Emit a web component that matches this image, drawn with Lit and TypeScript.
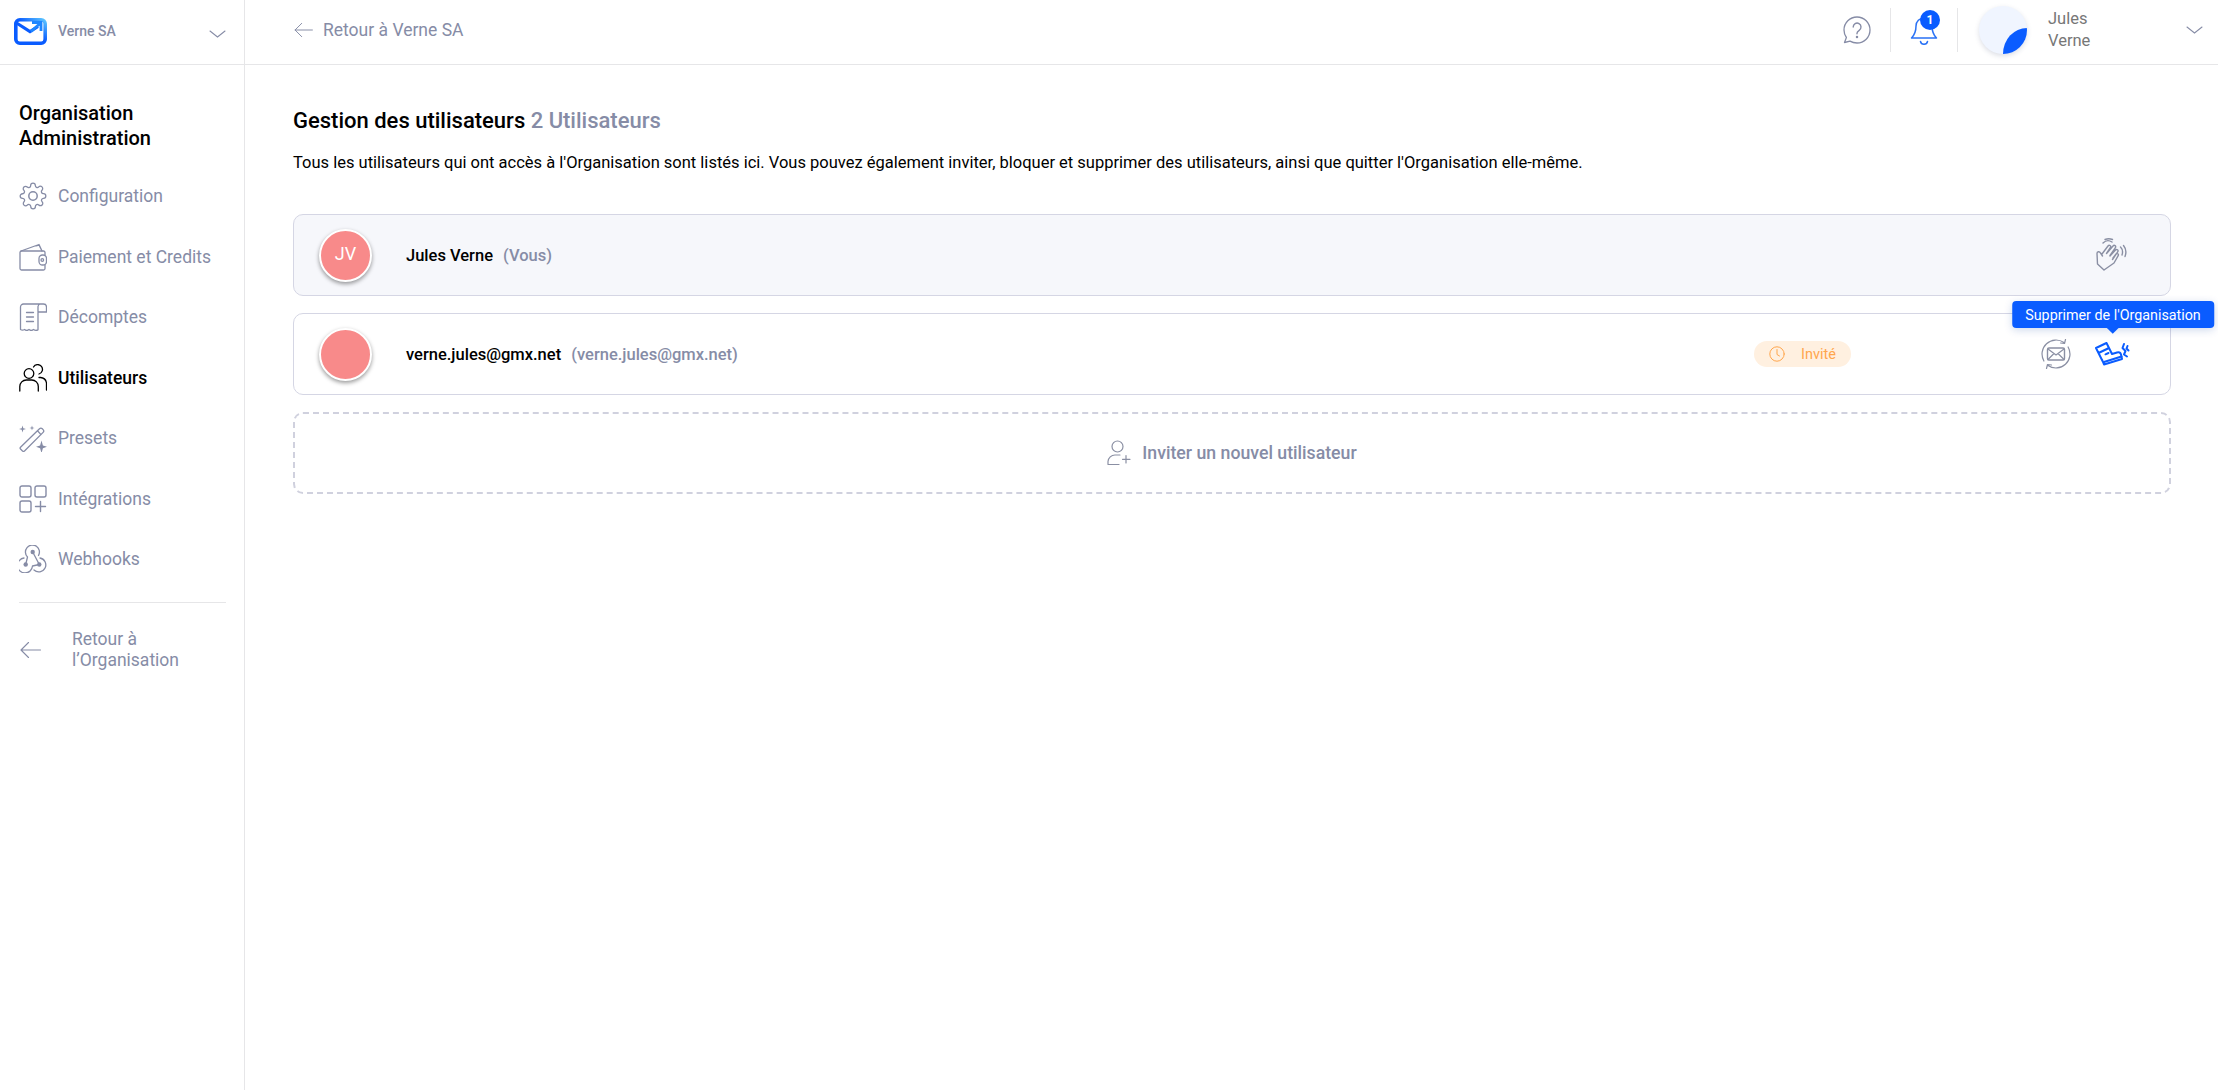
import { LitElement, html, css, svg } from "lit";
import { customElement } from "lit/decorators.js";

const icon = (size: number, vb: number, body: unknown, cls = "") => html`<svg class="ic ${cls}" width=${size} height=${size} viewBox="0 0 ${vb} ${vb}" fill="none" stroke="currentColor" stroke-width="1.3" stroke-linecap="round" stroke-linejoin="round">${body}</svg>`;

const chevron = html`<svg class="chev" width="17" height="8" viewBox="0 0 17 8" fill="none" stroke="currentColor" stroke-width="1.1" stroke-linecap="round"><path d="M1 1l7.5 6L16 1"/></svg>`;
const arrowLeft = (w: number, h: number) => html`<svg class="arrow" width=${w} height=${h} viewBox="0 0 21 18" fill="none" stroke="currentColor" stroke-width="1.1" stroke-linecap="round" stroke-linejoin="round"><path d="M20.5 9H1M8.5 1.5L1 9l7.5 7.5"/></svg>`;

const gear = icon(28, 24, svg`<circle cx="12" cy="12" r="3.6"/><path stroke-width="1.1" d="M19.4 15a1.65 1.65 0 0 0 .33 1.82l.06.06a2 2 0 0 1 0 2.83 2 2 0 0 1-2.83 0l-.06-.06a1.65 1.65 0 0 0-1.82-.33 1.65 1.65 0 0 0-1 1.51V21a2 2 0 0 1-2 2 2 2 0 0 1-2-2v-.09A1.65 1.65 0 0 0 9 19.4a1.65 1.65 0 0 0-1.82.33l-.06.06a2 2 0 0 1-2.83 0 2 2 0 0 1 0-2.83l.06-.06a1.65 1.65 0 0 0 .33-1.82 1.65 1.65 0 0 0-1.51-1H3a2 2 0 0 1-2-2 2 2 0 0 1 2-2h.09A1.65 1.65 0 0 0 4.6 9a1.65 1.65 0 0 0-.33-1.82l-.06-.06a2 2 0 0 1 0-2.83 2 2 0 0 1 2.83 0l.06.06a1.65 1.65 0 0 0 1.82.33H9a1.65 1.65 0 0 0 1-1.51V3a2 2 0 0 1 2-2 2 2 0 0 1 2 2v.09a1.65 1.65 0 0 0 1 1.51 1.65 1.65 0 0 0 1.82-.33l.06-.06a2 2 0 0 1 2.83 0 2 2 0 0 1 0 2.83l-.06.06a1.65 1.65 0 0 0-.33 1.82V9a1.65 1.65 0 0 0 1.51 1H21a2 2 0 0 1 2 2 2 2 0 0 1-2 2h-.09a1.65 1.65 0 0 0-1.51 1z"/>`);
const wallet = icon(28, 28, svg`<path d="M26 12V9.5A1.5 1.5 0 0 0 24.5 8h-22A1.5 1.5 0 0 0 1 9.5v16A1.5 1.5 0 0 0 2.500 27h22a1.500 1.500 0 0 0 1.500-1.500V22"/><path d="M2 8L20 1.500 23 8M17 2.800l3-.8 3 6"/><rect x="20" y="12" width="7.500" height="10" rx="3.500"/><circle cx="23.300" cy="17" r="1.300"/>`);
const receipt = icon(28, 28, svg`<path d="M21 1H4.500A3 3 0 0 0 1.500 4v22.500c1.500 1 2.500 1 4 0 1.500 1.300 3 1.300 4.500 0 1.500 1.300 3 1.300 4.500 0 1.500 1 3 1 4.500.3V3.500M21 1a3 3 0 0 0-2 2.500M21 1h3.500a3 3 0 0 1 3 3v5H19"/><path d="M7.500 9.500h7M7.500 14h7M7.500 18.500h7"/>`);
const users = icon(28, 28, svg`<circle cx="10" cy="9.500" r="4.800"/><path d="M14.500 3A4.800 4.800 0 1 1 20 10"/><path d="M.8 27v-4.500A6.500 6.500 0 0 1 7.300 16h5.500a6.500 6.500 0 0 1 6.500 6.500V27"/><path d="M20 13.500h1.500a6.500 6.500 0 0 1 6 5.500v7"/>`);
const wand = icon(28, 28, svg`<path d="M1.500 23.200L20.500 4.800a2 2 0 0 1 2.800 0l.8.800a2 2 0 0 1 0 2.800L5.500 27a1.500 1.500 0 0 1-2 0l-2-2a1.300 1.300 0 0 1 0-1.800zM18.500 6.800l3.500 3.800"/><g fill="currentColor" stroke="none"><path d="M22.500 16.500l1.400 5 4.100 1.300-4.100 1.400-1.400 5-1.400-5-4.100-1.400 4.100-1.300z"/><path d="M3.500 1.500l.8 2.700 2.700.8-2.700.8-.8 2.700-.8-2.700L0 5l2.700-.8z"/><path d="M13 1.500l.6 1.900 1.900.6-1.900.6-.6 1.900-.6-1.900-1.900-.6 1.900-.6z"/></g>`);
const apps = icon(28, 28, svg`<g stroke-width="1.400"><rect x="1" y="1" width="11" height="11" rx="2"/><rect x="16" y="1" width="11" height="11" rx="2"/><rect x="1" y="16" width="11" height="11" rx="2"/><path d="M21.500 16.500v10M16.500 21.500h10"/></g>`);
const webhook = icon(28, 28, svg`<g stroke-width="1.300"><path d="M19.500 10.500A7 7 0 1 0 8.500 12L6.700 19.500"/><path d="M13.700 7L20.300 19.500"/><path d="M5 13A7.500 7.500 0 1 0 13.500 21L20.300 19.500"/><path d="M21 13A7 7 0 1 1 15 25"/></g><g fill="currentColor" stroke="none"><circle cx="13.700" cy="7" r="2.200"/><circle cx="6.700" cy="19.500" r="2.200"/><circle cx="20.300" cy="19.500" r="2.200"/></g>`);

const logo = html`<svg class="logo" width="33" height="27" viewBox="0 0 33 27" fill="none"><defs><linearGradient id="lg" x1="0" y1="1" x2="1" y2="0"><stop offset=".55" stop-color="#0a5cff"/><stop offset="1" stop-color="#5cc4ff"/></linearGradient></defs><rect x="1.800" y="1.800" width="29.400" height="23.400" rx="4" stroke="url(#lg)" stroke-width="3.600"/><path d="M1 4l15 9.500 8-5" stroke="#0a5cff" stroke-width="3.200"/><path d="M18 4.500h9v8.500M26 5.500l-9 8" stroke="#1e86ff" stroke-width="2.800"/></svg>`;

const question = icon(28, 28, svg`<path d="M14 1C6.800 1 1 6.800 1 14c0 2.800.9 5.400 2.400 7.500L1.500 26.500 7 25.100C9 26.300 11.400 27 14 27c7.200 0 13-5.800 13-13S21.200 1 14 1z"/><path d="M10.200 11a3.900 3.900 0 1 1 6 3.300c-1.300.8-2.200 1.500-2.200 3v.5" stroke-width="1.400"/><circle cx="14" cy="21" r=".6"/>`);
const bell = html`<svg width="28" height="30" viewBox="0 0 28 30" fill="none" stroke="#2a72f5" stroke-width="1.500" stroke-linecap="round" stroke-linejoin="round"><path d="M14 3a8 8 0 0 0-8 8c0 6-1.500 9-4.500 12h25c-3-3-4.500-6-4.500-12a8 8 0 0 0-8-8z"/><path d="M10.500 26.500a3.600 3.600 0 0 0 7 0"/></svg>`;

const clock = html`<svg width="16" height="16" viewBox="0 0 16 16" fill="none" stroke="currentColor" stroke-width="1" stroke-linecap="round" stroke-linejoin="round"><circle cx="8" cy="8" r="7.200"/><path d="M8 3.500V8.500l2.500 1.500"/></svg>`;

const wave = html`<svg class="ic wave" width="32" height="34" viewBox="0 0 32 34" fill="none" stroke="#8a8fa3" stroke-width="1.400" stroke-linecap="round" stroke-linejoin="round"><path d="M8 32L1.500 26 1 15.500c0-2 2.500-2.500 3.500-.5l2 3M6 16L12 8c1.200-1.600 3.500-.2 2.300 1.700L10.500 15.500M11 15L17 8c1.300-1.500 3.500 0 2.300 1.800L14 17.500M14 18L19.500 12c1.300-1.400 3.300.2 2.200 1.800L16.500 21.500M17 20L20 16c1.200-1.300 3 .1 2.200 1.700L18 25 8 32"/><path d="M7 5C9.500 2.500 13 2 16 4M9 1.500C11.500.5 14 .5 16.500 1.500M24.500 9c2 2 2.500 5 1.500 8M27.500 7.500c2.500 3 3 7 1.500 11"/></svg>`;

const mailSync = html`<svg class="ic" width="30" height="30" viewBox="0 0 30 30" fill="none" stroke="#8a8fa3" stroke-width="1.200" stroke-linecap="round" stroke-linejoin="round"><path d="M23 3.500A14 14 0 0 0 2.900 22M24.500.5L23.500 4.500 19.500 4"/><path d="M7 26.500A14 14 0 0 0 27.100 8M5.500 29.500L6.500 25.500 10.500 26"/><rect x="6.500" y="9" width="17" height="12" rx="1.500" stroke-width="1.400"/><path d="M7 10l8 6 8-6M7 20.500l6-6M23 20.500l-6-6"/></svg>`;

const boot = html`<svg class="ic" width="36" height="24" viewBox="0 0 36 24" fill="none" stroke="#0a5cff" stroke-width="2" stroke-linecap="round" stroke-linejoin="round"><path d="M1 6L11.500 1 14 6 3.500 11zM3.500 11L7.500 19M14 6L17 12l5-1.500c2-.5 3.500 0 4 2l1 4.500L9 22.500 7 17.500"/><path d="M9 20L26.500 14.500M13.500 11l-3 1.300"/><path d="M29 2L27.500 6l3 3L29 12.500l3 2M32.500 4l-1 2.500 2 2"/></svg>`;

const userPlus = html`<svg class="ic" width="24" height="26" viewBox="0 0 24 26" fill="none" stroke="#8a8fa3" stroke-width="1.200" stroke-linecap="round" stroke-linejoin="round"><circle cx="10.500" cy="6.500" r="5.500"/><path d="M1 24v-2.500A7 7 0 0 1 8 15h5M1 24.500h11M19 15.500v7.500M15.500 19.300h7.500"/></svg>`;

const nav = [
  { label: "Configuration", icon: gear },
  { label: "Paiement et Credits", icon: wallet },
  { label: "Décomptes", icon: receipt },
  { label: "Utilisateurs", icon: users, active: true },
  { label: "Presets", icon: wand },
  { label: "Intégrations", icon: apps },
  { label: "Webhooks", icon: webhook },
];

@customElement("app-root")
export class AppRoot extends LitElement {
  static styles = css`
    :host { display: block; height: 1090px; font-family: Roboto, sans-serif; color: #000; background: #fff; overflow: hidden; }
    * { box-sizing: border-box; }
    .app { display: grid; grid-template-columns: 245px 1fr; height: 1090px; }
    .side { border-right: 1px solid #e6e6e8; display: flex; flex-direction: column; }
    .brand { height: 65px; border-bottom: 1px solid #e6e6e8; display: flex; align-items: center; padding: 0 18px 2px 14px; flex: none; }
    .brand .name { margin-left: 11px; font-size: 14px; font-weight: 500; color: #868ca6; flex: 1; }
    .brand .chev { margin-top: 5px; }
    .chev { color: #868ca6; flex: none; }
    .side-body { padding: 36px 18px 0 19px; }
    .org { font-size: 20px; font-weight: 500; line-height: 25px; margin: 0 0 15px; }
    .item { display: flex; align-items: center; height: 60.500px; font-size: 17.500px; color: #868ca6; }
    .item .ic { margin-right: 11px; flex: none; }
    .item.active { color: #000; font-weight: 500; }
    .sep { height: 1px; background: #e6e6e8; margin: 12px 0 0; }
    .back { display: flex; align-items: center; margin-top: 26px; color: #868ca6; font-size: 17.500px; line-height: 21px; }
    .back .arrow { margin: 0 31px 0 1px; flex: none; }
    .main { display: flex; flex-direction: column; min-width: 0; }
    .top { height: 65px; border-bottom: 1px solid #e6e6e8; display: flex; align-items: center; padding: 0 15px 4px 49px; flex: none; }
    .crumb { display: flex; align-items: center; color: #868ca6; font-size: 17.500px; flex: 1; }
    .crumb .arrow { margin-right: 10px; }
    .q { color: #868ca6; display: flex; }
    .vr { width: 1px; height: 44px; background: #e6e6e8; }
    .vr.first { margin-left: 19px; }
    .bell { position: relative; display: flex; margin: 0 19px; }
    .badge { position: absolute; top: -5px; left: 10px; width: 20px; height: 20px; border-radius: 50%; background: #0a5cff; color: #fff; font-size: 12px; font-weight: 700; display: flex; align-items: center; justify-content: center; }
    .me { width: 48px; height: 48px; border-radius: 50%; background: #f0f5ff; box-shadow: 0 2px 5px rgba(60,70,110,.18); margin-left: 21px; position: relative; overflow: hidden; flex: none; }
    .me i { position: absolute; left: 24px; top: 22px; width: 24px; height: 26px; background: #0a5cff; border-radius: 100% 0 0 0; }
    .me-name { margin-left: 21px; font-size: 16.500px; line-height: 22px; color: #777; width: 138px; }
    .content { padding: 42px 47px 0 48px; }
    h1 { margin: 0; font-size: 22px; font-weight: 500; line-height: 28px; }
    h1 span { color: #868ca6; }
    .desc { margin: 17px 0 40px; font-size: 16.500px; line-height: 22px; }
    .card { position: relative; height: 82px; border: 1px solid #d5d6e4; border-radius: 10px; display: flex; align-items: center; padding: 0 39px 0 25px; margin-bottom: 17px; }
    .card.me-card { background: #f6f7fb; }
    .wave { margin-right: 3px; }
    .av { width: 53px; height: 53px; border-radius: 50%; background: #f88a8a; border: 2px solid #fff; box-shadow: 0 2px 4px rgba(0,0,0,.4); color: #fff; font-size: 18px; display: flex; align-items: center; justify-content: center; flex: none; padding-bottom: 3px; }
    .who { margin-left: 34px; font-size: 16.500px; font-weight: 500; flex: 1; }
    .who span { color: #868ca6; margin-left: 6px; }
    .pill { display: flex; align-items: center; width: 97px; height: 26px; border-radius: 13px; background: #fff0e0; color: #ffa64d; font-size: 14.500px; padding-left: 15px; gap: 16px; margin-right: 190px; }
    .acts { display: flex; align-items: center; gap: 24px; }
    .boot { color: #0a5cff; position: relative; display: flex; }
    .tip { position: absolute; left: 50%; transform: translateX(-50%); top: -41px; height: 27px; padding: 0 13px; background: #0a5cff; color: #fff; font-size: 14.300px; display: flex; align-items: center; white-space: nowrap; border-radius: 4px; box-shadow: 0 2px 8px rgba(10,60,160,.2); }
    .tip::after { content: ""; position: absolute; left: 50%; bottom: -4px; width: 9px; height: 9px; margin-left: -5px; background: #0a5cff; transform: rotate(45deg); }
    .invite { height: 82px; border: 2px dashed #d0d1de; border-radius: 10px; display: flex; align-items: center; justify-content: center; gap: 11px; color: #868ca6; font-size: 17.700px; font-weight: 500; }
  `;

  render() {
    return html`<div class="app">
      <aside class="side">
        <div class="brand">${logo}<span class="name">Verne SA</span>${chevron}</div>
        <div class="side-body">
          <h2 class="org">Organisation<br />Administration</h2>
          ${nav.map((n) => html`<div class="item ${n.active ? "active" : ""}">${n.icon}<span>${n.label}</span></div>`)}
          <div class="sep"></div>
          <div class="back">${arrowLeft(21, 18)}<span>Retour à<br />l’Organisation</span></div>
        </div>
      </aside>
      <main class="main">
        <header class="top">
          <div class="crumb">${arrowLeft(19, 16)}<span>Retour à Verne SA</span></div>
          <span class="q">${question}</span>
          <span class="vr first"></span>
          <span class="bell">${bell}<span class="badge">1</span></span>
          <span class="vr"></span>
          <span class="me"><i></i></span>
          <span class="me-name">Jules<br />Verne</span>
          ${chevron}
        </header>
        <section class="content">
          <h1>Gestion des utilisateurs <span>2 Utilisateurs</span></h1>
          <p class="desc">Tous les utilisateurs qui ont accès à l'Organisation sont listés ici. Vous pouvez également inviter, bloquer et supprimer des utilisateurs, ainsi que quitter l'Organisation elle-même.</p>
          <div class="card me-card">
            <div class="av">JV</div>
            <div class="who">Jules Verne <span>(Vous)</span></div>
            ${wave}
          </div>
          <div class="card">
            <div class="av"></div>
            <div class="who">verne.jules@gmx.net <span>(verne.jules@gmx.net)</span></div>
            <div class="pill">${clock}<span>Invité</span></div>
            <div class="acts">${mailSync}<span class="boot">${boot}<span class="tip">Supprimer de l'Organisation</span></span></div>
          </div>
          <div class="invite">${userPlus}<span>Inviter un nouvel utilisateur</span></div>
        </section>
      </main>
    </div>`;
  }
}
